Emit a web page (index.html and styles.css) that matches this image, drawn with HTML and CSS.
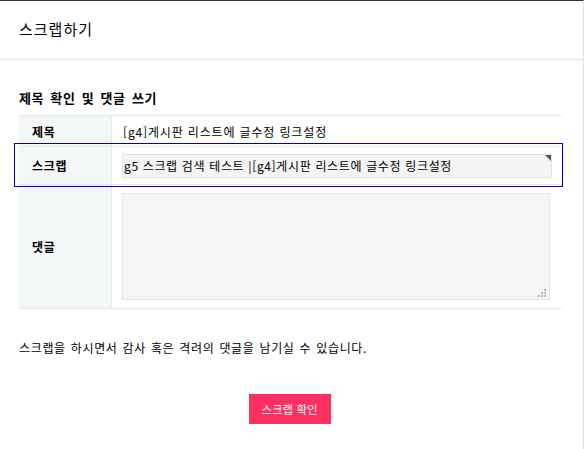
FILE: index.html
```html
<!DOCTYPE html>
<html lang="ko">
<head>
<meta charset="utf-8">
<title>스크랩하기</title>
<link rel="stylesheet" href="styles.css">
</head>
<body>
<div class="win">
  <header class="hd"><h1 class="hd-title">스크랩하기</h1></header>
  <main class="ct">
    <h2 class="sec">제목 확인 및 댓글 쓰기</h2>
    <div class="tbl">
      <div class="row r1">
        <div class="th">제목</div>
        <div class="td td-text">[g4]게시판 리스트에 글수정 링크설정</div>
      </div>
      <div class="row r2 focus">
        <div class="th">스크랩</div>
        <div class="td"><span class="inp"><input class="field" type="text" value="g5 스크랩 검색 테스트 |[g4]게시판 리스트에 글수정 링크설정"></span></div>
      </div>
      <div class="row r3">
        <div class="th">댓글</div>
        <div class="td td-top"><span class="ta-wrap"><textarea class="ta"></textarea><svg class="grip" width="8" height="8" viewBox="0 0 8 8"><rect x="6" y="0" width="2" height="2"/><rect x="3" y="3" width="2" height="2"/><rect x="6" y="3" width="2" height="2"/><rect x="0" y="6" width="2" height="2"/><rect x="3" y="6" width="2" height="2"/><rect x="6" y="6" width="2" height="2"/></svg></span></div>
      </div>
    </div>
    <p class="note">스크랩을 하시면서 감사 혹은 격려의 댓글을 남기실 수 있습니다.</p>
    <div class="act"><button class="btn" type="button">스크랩 확인</button></div>
  </main>
</div>
</body>
</html>
```
FILE: styles.css
```css
* { box-sizing: border-box; }
html, body { margin: 0; padding: 0; background: #fff; }
body {
  font-family: "Noto Sans CJK KR", "Noto Sans", sans-serif;
  color: #000;
  font-size: 12px;
  letter-spacing: 0.65px;
}
.win {
  width: 584px;
  min-height: 449px;
  border-top: 1px solid #333;
  border-right: 1px solid #e3e3e3;
}
.hd {
  height: 59px;
  border-bottom: 1px solid #e4e7ea;
  display: flex;
  align-items: center;
  padding-left: 19px;
}
.hd-title {
  margin: 0;
  font-size: 15px;
  font-weight: normal;
  line-height: 20px;
  letter-spacing: 1px;
  position: relative;
  top: -1px;
}
.ct { padding: 29px 21px 0 19px; }
.sec {
  margin: 0 0 8px;
  font-size: 13px;
  font-weight: bold;
  line-height: 18px;
  letter-spacing: 0.6px;
  word-spacing: 2px;
}
.tbl { border-top: 1px solid #e8e8e8; }
.row {
  display: grid;
  grid-template-columns: 93px 1fr;
  border-bottom: 1px solid #e8e8e8;
}
.r1 { height: 31px; }
.r2 { height: 38px; }
.r3 { height: 124px; }
.focus { position: relative; }
.focus::after {
  content: "";
  position: absolute;
  top: -4px;
  bottom: -3px;
  left: -5px;
  right: -1px;
  border: 1px solid #0000c8;
  pointer-events: none;
}
.th {
  background: #f4f7f8;
  border-right: 1px solid #e8e8e8;
  padding-left: 13px;
  font-weight: bold;
  display: flex;
  align-items: center;
}
.td {
  display: flex;
  align-items: center;
  padding: 0 10px;
}
.td-text { padding-left: 11px; letter-spacing: 0.85px; }
.td-top { align-items: flex-start; padding-top: 8px; }
.inp { position: relative; display: block; width: 100%; }
.inp::after {
  content: "";
  position: absolute;
  top: 1px;
  right: 1px;
  border-style: solid;
  border-width: 0 6px 6px 0;
  border-color: transparent #55554a transparent transparent;
}
.field {
  display: block;
  width: 100%;
  height: 24px;
  margin: 0;
  border: 1px solid #e3e3e3;
  background: #f4f4f4;
  padding: 0 1px;
  font: inherit;
  letter-spacing: 0.65px;
  color: #000;
  outline: none;
}
.ta-wrap { position: relative; display: block; width: 428px; height: 107px; }
.ta {
  display: block;
  width: 100%;
  height: 100%;
  margin: 0;
  border: 1px solid #e3e3e3;
  background: #f5f5f5;
  resize: none;
  font: inherit;
  outline: none;
}
.grip {
  position: absolute;
  right: 4px;
  bottom: 3px;
  fill: #b8b8b8;
}
.note {
  margin: 30px 0 0;
  line-height: 18px;
  word-spacing: 1px;
}
.act {
  display: flex;
  justify-content: center;
  margin-top: 37px;
  padding-right: 2px;
}
.btn {
  width: 82px;
  height: 30px;
  border: 0;
  margin: 0;
  background: #ff3061;
  color: #fff;
  font: inherit;
  font-size: 11.5px;
  letter-spacing: 0;
  padding: 0;
}
```
